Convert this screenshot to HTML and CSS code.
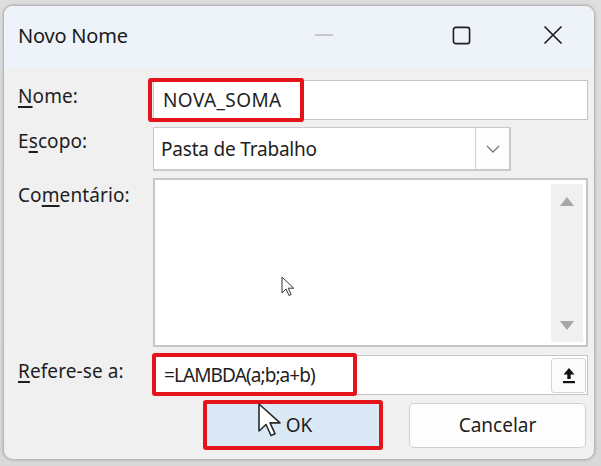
FILE: index.html
```html
<!DOCTYPE html>
<html lang="pt">
<head>
<meta charset="utf-8">
<title>Novo Nome</title>
<link rel="stylesheet" href="styles.css">
</head>
<body>
<div class="screen">
  <div class="dialog">
    <div class="titlebar">
      <span class="title">Novo Nome</span>
      <div class="controls">
        <svg class="ctl ctl-min" width="20" height="20" viewBox="0 0 20 20"><path d="M1 10h18" stroke="#b9bcc2" stroke-width="1.6"/></svg>
        <svg class="ctl ctl-max" width="20" height="20" viewBox="0 0 20 20"><rect x="1.5" y="1.5" width="17" height="17" rx="2.5" fill="none" stroke="#1f1f1f" stroke-width="1.7"/></svg>
        <svg class="ctl ctl-close" width="20" height="20" viewBox="0 0 20 20"><path d="M1.5 1.5l17 17M18.5 1.5l-17 17" stroke="#1f1f1f" stroke-width="1.7"/></svg>
      </div>
    </div>
    <div class="body">
      <div class="form">
        <label class="lbl lbl-name"><u>N</u>ome:</label>
        <div class="field text-field">
          <span class="value">NOVA_SOMA</span>
          <span class="mark mark-name"></span>
        </div>

        <label class="lbl lbl-scope">E<u>s</u>copo:</label>
        <div class="scope-row">
          <div class="field select-field">
            <span class="value">Pasta de Trabalho</span>
            <span class="drop">
              <svg width="14" height="8" viewBox="0 0 14 8"><path d="M1 1l6 6 6-6" fill="none" stroke="#7a7a7a" stroke-width="1.3"/></svg>
            </span>
          </div>
        </div>

        <label class="lbl lbl-comment">Co<u>m</u>entário:</label>
        <div class="field area-field">
          <div class="area-text"></div>
          <div class="scrollbar">
            <svg width="14" height="9" viewBox="0 0 14 9"><path d="M0 9L7 0l7 9z" fill="#a6a6a6"/></svg>
            <svg width="14" height="9" viewBox="0 0 14 9"><path d="M0 0h14L7 9z" fill="#a6a6a6"/></svg>
          </div>
        </div>

        <label class="lbl lbl-ref"><u>R</u>efere-se a:</label>
        <div class="field ref-field">
          <span class="value">=LAMBDA(a;b;a+b)</span>
          <span class="mark mark-ref"></span>
          <span class="collapse">
            <svg width="14" height="17" viewBox="0 0 14 17"><path d="M7 1L1.5 7.5h3.8V12h3.4V7.5h3.8z" fill="#111"/><rect x="1" y="14" width="12" height="2.2" fill="#111"/></svg>
          </span>
        </div>
      </div>
      <div class="buttons">
        <button class="btn btn-ok">OK</button>
        <button class="btn btn-cancel">Cancelar</button>
      </div>
    </div>
  </div>
  <svg class="cursor cursor-small" width="14" height="21" viewBox="0 0 14 21"><path d="M1 1v16l4-4 3 6.5 2.2-1-3-6.3h5.5z" fill="#fff" stroke="#333" stroke-width="1"/></svg>
  <svg class="cursor cursor-big" width="30" height="36" viewBox="0 0 30 36"><path d="M2 2v27l7-6.5 5 11 4-1.8-5-10.8h10z" fill="#fff" stroke="#2a2a2a" stroke-width="1.6" stroke-linejoin="round"/></svg>
</div>
</body>
</html>
```
FILE: styles.css
```css
* { box-sizing: border-box; }
html, body { margin: 0; padding: 0; }
body {
  font-family: "Noto Sans", "Open Sans", sans-serif;
  color: #1e1e1e;
  background: #dcdcdc;
}
.screen {
  position: relative;
  width: 601px;
  height: 466px;
  overflow: hidden;
  background: linear-gradient(#dedede, #d9d9d9);
  padding: 5px 6px 0 3px;
}
.dialog {
  width: 592px;
  height: 455px;
  border: 1px solid #b8b8b8;
  border-radius: 10px;
  overflow: hidden;
  display: flex;
  flex-direction: column;
  background: #f0f0f0;
  box-shadow: 0 0 3px rgba(0,0,0,0.25);
}
.titlebar {
  height: 62px;
  background: #eef2f9;
  display: flex;
  align-items: center;
  padding: 0 0 4px 14px;
  flex: none;
}
.title {
  font-size: 20px;
  letter-spacing: -0.2px;
  color: #1b1b1b;
}
.controls {
  margin-left: auto;
  display: flex;
  align-items: center;
}
.ctl { display: block; }
.ctl-min { margin-right: 118px; }
.ctl-max { width: 19px; height: 19px; margin-right: 72px; }
.ctl-close { width: 20px; height: 20px; margin-right: 31px; }

.body {
  flex: 1;
  padding: 12px 6px 0 14px;
  display: flex;
  flex-direction: column;
}
.form {
  display: grid;
  grid-template-columns: 135px 435px;
  row-gap: 7px;
}
.lbl {
  font-size: 19px;
  line-height: 24px;
  padding-top: 4px;
  color: #1e1e1e;
  letter-spacing: 0.1px;
}
.lbl u { text-decoration-thickness: 1.5px; text-underline-offset: 3px; }
.lbl-scope { padding-top: 2px; }
.lbl-comment { padding-top: 5px; }
.lbl-ref { padding-top: 5px; }

.field {
  position: relative;
  background: #fff;
  border: 1px solid #c4c4c4;
  font-size: 19px;
  color: #1e1e1e;
}
.text-field {
  height: 40px;
  display: flex;
  align-items: center;
  padding-left: 9px;
}
.text-field .value { letter-spacing: 0.4px; }
.mark {
  position: absolute;
  border: 4px solid #e3141c;
  border-radius: 3px;
  pointer-events: none;
}
.mark-name { left: -6px; top: -3px; bottom: -3px; width: 156px; }
.mark-ref { left: -2px; top: -3px; bottom: -2px; width: 205px; }

.scope-row { display: flex; }
.select-field {
  width: 358px;
  height: 44px;
  display: flex;
  align-items: center;
  padding-left: 7px;
  border-color: #c9c9c9;
  border-width: 1px 2px 2px 1px;
}
.select-field .value { flex: 1; letter-spacing: -0.2px; }
.drop {
  width: 34px;
  height: 100%;
  border-left: 1px solid #cfcfcf;
  display: flex;
  align-items: center;
  justify-content: center;
  background: #fdfdfd;
}
.drop svg { display: block; }

.area-field {
  height: 169px;
  display: flex;
  padding: 4px 3px 3px 0;
  border-color: #c6c6c6;
  border-width: 2px;
}
.area-text { flex: 1; }
.scrollbar {
  width: 32px;
  background: #f0f0f0;
  display: flex;
  flex-direction: column;
  align-items: center;
  justify-content: space-between;
  padding: 13px 0 12px;
}
.scrollbar svg { display: block; }

.ref-field {
  margin-top: 1px;
  height: 40px;
  display: flex;
  align-items: center;
  padding-left: 10px;
  padding-right: 1px;
}
.ref-field .value { flex: 1; letter-spacing: -0.9px; }
.collapse {
  width: 35px;
  height: 35px;
  border: 1px solid #d4d4d4;
  border-radius: 3px;
  background: #fbfbfb;
  display: flex;
  align-items: center;
  justify-content: center;
}
.collapse svg { display: block; }

.buttons {
  display: flex;
  justify-content: flex-end;
  align-items: center;
  gap: 26px;
  padding-right: 2px;
  margin-top: 5px;
}
.btn {
  font-family: "Noto Sans", "Open Sans", sans-serif;
  font-size: 19px;
  color: #1e1e1e;
  margin: 0;
}
.btn-ok {
  width: 180px;
  height: 50px;
  border: 4px solid #e3141c;
  border-radius: 3px;
  background: #dbe8f5;
  padding: 0 0 0 12px;
}
.btn-cancel {
  width: 177px;
  height: 45px;
  border: 1px solid #cfcfcf;
  border-radius: 5px;
  background: #fdfdfd;
}

.cursor { position: absolute; display: block; }
.cursor-small { left: 281px; top: 276px; }
.cursor-big { left: 257px; top: 402px; }
```
